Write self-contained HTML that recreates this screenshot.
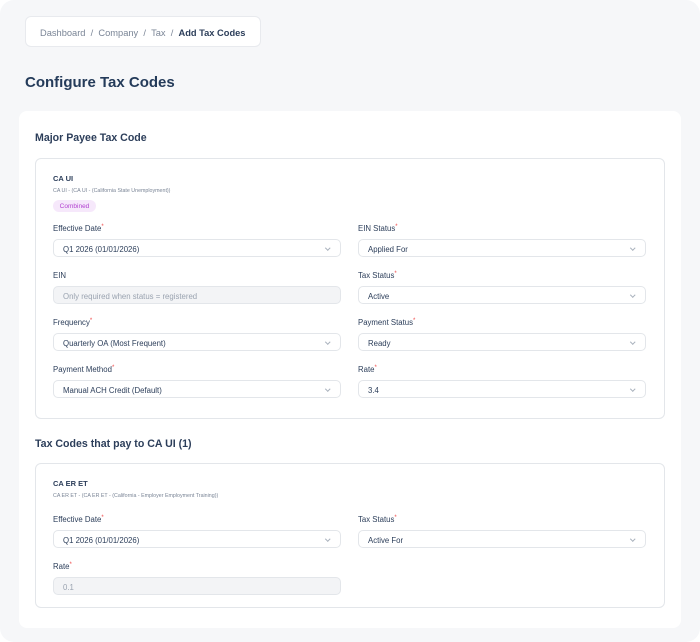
<!DOCTYPE html>
<html><head><style>
*{box-sizing:border-box;margin:0;padding:0}
body{width:700px;height:642px;background:#fff;font-family:"Liberation Sans",sans-serif;color:#243b5a;position:relative;overflow:hidden}
.page{position:absolute;left:0;top:0;width:700px;height:642px;background:#f6f7f9;border-radius:14px}
.abs{position:absolute}
.bc{left:25px;top:16px;width:236px;height:31px;background:#fff;border:1px solid #e8eaee;border-radius:6px;font-size:9.3px;color:#7a8596;padding:11px 0 0 14px;white-space:nowrap}
.bc b{color:#2c3e5a}
.title{left:25px;top:74px;font-size:15px;font-weight:bold;color:#243b5a}
.card{left:19px;top:111px;width:662px;height:517px;background:#fff;border-radius:8px}
.h2{font-size:10.6px;font-weight:bold;color:#2c3e5a;left:35px}
.inner{left:35px;width:630px;border:1px solid #e3e6ea;border-radius:6px;background:#fff}
.name{font-size:7.5px;font-weight:bold;color:#2c3e5a}
.sub{font-size:5.3px;color:#7a8596}
.lbl{font-size:7.8px;color:#2c3e5a}
.lbl.r:after{content:"*";color:#ef4444;font-size:6px;vertical-align:top}
.inp{height:18px;width:288px;border:1px solid #e3e6ea;border-radius:5px;background:#fff;font-size:7.8px;color:#2c3e5a;padding:4.5px 0 0 9px}
.inp.dd:after{content:"";position:absolute;right:11px;top:5.5px;width:2.5px;height:2.5px;border-right:1px solid #a8b0bc;border-bottom:1px solid #a8b0bc;transform:rotate(45deg)}
.gray{background:#f3f4f6;color:#9aa3b0}
.badge{left:53px;top:200px;width:43px;height:12px;background:#f6e8fb;color:#b13fd0;font-size:6.5px;border-radius:6px;text-align:center;padding-top:2.5px}
</style></head><body>
<div class="page"></div>
<div class="abs bc">Dashboard&nbsp; / &nbsp;Company&nbsp; / &nbsp;Tax&nbsp; / &nbsp;<b>Add Tax Codes</b></div>
<div class="abs title">Configure Tax Codes</div>
<div class="abs card"></div>
<div class="abs h2" style="top:132px">Major Payee Tax Code</div>
<div class="abs inner" style="top:158px;height:261px"></div>
<div class="abs name" style="left:53px;top:174px">CA UI</div>
<div class="abs sub" style="left:53px;top:188px">CA UI - (CA UI - (California State Unemployment))</div>
<div class="abs badge">Combined</div>

<div class="abs lbl r" style="left:53px;top:224px">Effective Date</div>
<div class="abs inp dd" style="left:53px;top:239px">Q1 2026 (01/01/2026)</div>
<div class="abs lbl r" style="left:358px;top:224px">EIN Status</div>
<div class="abs inp dd" style="left:358px;top:239px">Applied For</div>

<div class="abs lbl" style="left:53px;top:271px;">EIN</div>
<div class="abs inp gray" style="left:53px;top:286px">Only required when status = registered</div>
<div class="abs lbl r" style="left:358px;top:271px">Tax Status</div>
<div class="abs inp dd" style="left:358px;top:286px">Active</div>

<div class="abs lbl r" style="left:53px;top:318px">Frequency</div>
<div class="abs inp dd" style="left:53px;top:333px">Quarterly OA (Most Frequent)</div>
<div class="abs lbl r" style="left:358px;top:318px">Payment Status</div>
<div class="abs inp dd" style="left:358px;top:333px">Ready</div>

<div class="abs lbl r" style="left:53px;top:365px">Payment Method</div>
<div class="abs inp dd" style="left:53px;top:380px">Manual ACH Credit (Default)</div>
<div class="abs lbl r" style="left:358px;top:365px">Rate</div>
<div class="abs inp dd" style="left:358px;top:380px">3.4</div>

<div class="abs h2" style="top:438px">Tax Codes that pay to CA UI (1)</div>
<div class="abs inner" style="top:463px;height:145px"></div>
<div class="abs name" style="left:53px;top:479px">CA ER ET</div>
<div class="abs sub" style="left:53px;top:493px">CA ER ET - (CA ER ET - (California - Employer Employment Training))</div>
<div class="abs lbl r" style="left:53px;top:515px">Effective Date</div>
<div class="abs inp dd" style="left:53px;top:530px">Q1 2026 (01/01/2026)</div>
<div class="abs lbl r" style="left:358px;top:515px">Tax Status</div>
<div class="abs inp dd" style="left:358px;top:530px">Active For</div>
<div class="abs lbl r" style="left:53px;top:562px">Rate</div>
<div class="abs inp gray" style="left:53px;top:577px">0.1</div>
</body></html>
